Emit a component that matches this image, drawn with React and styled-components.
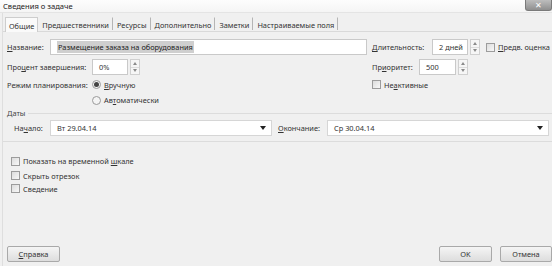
import React from "react";
import styled, { createGlobalStyle } from "styled-components";

const Global = createGlobalStyle`
  html, body { margin: 0; padding: 0; background: #f0f0f0; }
  body { font-family: "Noto Sans", "Open Sans", sans-serif; font-size: 7.4px; color: #333; }
  * { box-sizing: border-box; }
`;

const Window = styled.div`
  width: 552px;
  height: 266px;
  display: flex;
  flex-direction: column;
  background: #f0f0f0;
  overflow: hidden;
`;

const TitleBar = styled.div`
  height: 13px;
  flex: none;
  display: flex;
  align-items: flex-start;
  justify-content: space-between;
  background: linear-gradient(#fdfdfd, #f5f5f5);
  border-bottom: 1px solid #e4e4e4;
`;

const Title = styled.span`
  padding: 1px 0 0 3px;
  font-size: 7.6px;
  line-height: 11px;
  color: #222;
`;

const CloseBtn = styled.div`
  width: 27px;
  height: 11px;
  display: flex;
  align-items: center;
  justify-content: center;
  background: linear-gradient(#bdbdbd, #8f8f8f);
  border: 1px solid #7a7a7a;
  border-top: none;
  border-radius: 0 0 3px 3px;
  color: #fff;
  font-size: 8px;
  line-height: 8px;
`;

const Frame = styled.div`
  flex: 1;
  display: flex;
  flex-direction: column;
  margin-left: 2px;
  border-left: 1px solid #dedede;
`;

const TabStrip = styled.div`
  display: flex;
  align-items: flex-end;
  height: 19px;
  flex: none;
  padding-left: 2px;
  border-bottom: 1px solid #d9d9d9;
`;

const Tab = styled.div`
  height: ${(p) => (p.$active ? "15px" : "13px")};
  padding: 1px 3px 0 3px;
  margin-bottom: ${(p) => (p.$active ? "-1px" : "1px")};
  display: flex;
  align-items: center;
  border: 1px solid ${(p) => (p.$active ? "#cdcdcd" : "transparent")};
  border-bottom: none;
  border-right: 1px solid ${(p) => (p.$active ? "#cdcdcd" : "#b5b5b5")};
  background: ${(p) => (p.$active ? "#fafafa" : "transparent")};
  white-space: nowrap;
  color: #333;
`;

const Panel = styled.div`
  flex: 1;
  display: flex;
  flex-direction: column;
  padding: 7px 0 4px 4px;
`;

const Row = styled.div`
  display: flex;
  align-items: center;
  height: ${(p) => p.$h || 16}px;
  flex: none;
  margin-top: ${(p) => p.$mt || 0}px;
  margin-bottom: ${(p) => p.$mb || 0}px;
`;

const Half = styled.div`
  display: flex;
  align-items: center;
  width: ${(p) => p.$w}px;
  flex: ${(p) => (p.$w ? "none" : 1)};
`;

const Label = styled.span`
  width: ${(p) => p.$w}px;
  flex: none;
  white-space: nowrap;
  color: #333;
  padding-left: ${(p) => p.$pl || 0}px;
`;

const Input = styled.div`
  width: ${(p) => p.$w}px;
  height: 16px;
  flex: none;
  display: flex;
  align-items: center;
  justify-content: space-between;
  padding: 0 5px 0 6px;
  background: #fff;
  border: 1px solid ${(p) => p.$border || "#c9c9c9"};
  white-space: nowrap;
  color: #333;
`;

const Selected = styled.span`
  background: #cfcfcf;
  padding: 1px 1px;
  color: #222;
`;

const Spin = styled.div`
  width: 10px;
  height: 16px;
  margin-left: 2px;
  flex: none;
  display: flex;
  flex-direction: column;
  border: 1px solid #d0d0d0;
  background: #f6f6f6;
`;

const SpinHalf = styled.div`
  flex: 1;
  display: flex;
  align-items: center;
  justify-content: center;
  border-top: ${(p) => (p.$bottom ? "1px solid #dcdcdc" : "none")};
  svg { display: block; }
`;

const Arrow = ({ down }) => (
  <svg width="4" height="3" viewBox="0 0 4 3">
    <path d={down ? "M0 0H4L2 3Z" : "M0 3H4L2 0Z"} fill="#8a8a8a" />
  </svg>
);

const DropArrow = styled.span`
  width: 0;
  height: 0;
  border-left: 3px solid transparent;
  border-right: 3px solid transparent;
  border-top: 4px solid #222;
`;

const Check = styled.span`
  width: 9px;
  height: 9px;
  flex: none;
  margin-right: ${(p) => p.$mr || 3}px;
  border: 1px solid #9c9c9c;
  background: linear-gradient(135deg, #dcdcdc, #f8f8f8);
`;

const Radio = styled.span`
  width: 9px;
  height: 9px;
  flex: none;
  margin-right: 3px;
  border-radius: 50%;
  border: 1px solid #9a9a9a;
  background: #f4f4f4;
  display: flex;
  align-items: center;
  justify-content: center;
  &::after {
    content: "";
    width: 5px;
    height: 5px;
    border-radius: 50%;
    background: ${(p) => (p.$on ? "#444" : "transparent")};
  }
`;

const Option = styled.label`
  display: flex;
  align-items: center;
  white-space: nowrap;
  color: #333;
  margin-left: ${(p) => p.$ml || 0}px;
`;

const U = styled.span`
  text-decoration: underline;
`;

const Group = styled.div`
  display: flex;
  align-items: center;
  height: 10px;
  flex: none;
  color: #444;
  &::after {
    content: "";
    flex: 1;
    height: 1px;
    margin-left: 3px;
    background: #dcdcdc;
  }
`;

const Separator = styled.div`
  height: 1px;
  flex: none;
  background: #dcdcdc;
  margin: 5px 0 12px -4px;
`;

const CheckRow = styled.div`
  display: flex;
  align-items: center;
  flex: none;
  height: ${(p) => p.$h || 14}px;
  padding-left: 4px;
`;

const Spacer = styled.div`
  flex: 1;
`;

const Footer = styled.div`
  display: flex;
  align-items: center;
  flex: none;
  padding: 0 0 4px 4px;
`;

const Button = styled.div`
  width: ${(p) => p.$w}px;
  height: 16px;
  display: flex;
  align-items: center;
  justify-content: center;
  margin-left: ${(p) => p.$ml || 0}px;
  border: 1px solid #a9a9a9;
  border-radius: 2px;
  background: linear-gradient(#f5f5f5, #dddddd);
  color: #333;
`;

export default function App() {
  return (
    <>
      <Global />
      <Window>
        <TitleBar>
          <Title>Сведения о задаче</Title>
          <CloseBtn>✕</CloseBtn>
        </TitleBar>
        <Frame>
          <TabStrip>
            <Tab $active>Общие</Tab>
            <Tab>Предшественники</Tab>
            <Tab>Ресурсы</Tab>
            <Tab>Дополнительно</Tab>
            <Tab>Заметки</Tab>
            <Tab>Настраиваемые поля</Tab>
          </TabStrip>
          <Panel>
            <Row $mb={4}>
              <Half $w={365}>
                <Label $w={43}><U>Н</U>азвание:</Label>
                <Input $w={317}>
                  <Selected>Размещение заказа на оборудования</Selected>
                </Input>
              </Half>
              <Half>
                <Label $w={60}><U>Д</U>лительность:</Label>
                <Input $w={36}>2 дней</Input>
                <Spin>
                  <SpinHalf><Arrow /></SpinHalf>
                  <SpinHalf $bottom><Arrow down /></SpinHalf>
                </Spin>
                <Option $ml={6}>
                  <Check />
                  <span><U>П</U>редв. оценка</span>
                </Option>
              </Half>
            </Row>
            <Row $mb={2}>
              <Half $w={365}>
                <Label $w={85}>Про<U>ц</U>ент завершения:</Label>
                <Input $w={36}>0%</Input>
                <Spin>
                  <SpinHalf><Arrow /></SpinHalf>
                  <SpinHalf $bottom><Arrow down /></SpinHalf>
                </Spin>
              </Half>
              <Half>
                <Label $w={47}>Пр<U>и</U>оритет:</Label>
                <Input $w={37}>500</Input>
                <Spin>
                  <SpinHalf><Arrow /></SpinHalf>
                  <SpinHalf $bottom><Arrow down /></SpinHalf>
                </Spin>
              </Half>
            </Row>
            <Row $h={15}>
              <Half $w={365}>
                <Label $w={85}>Режим планирования:</Label>
                <Option>
                  <Radio $on />
                  <span><U>В</U>ручную</span>
                </Option>
              </Half>
              <Half>
                <Option>
                  <Check />
                  <span>Не<U>а</U>ктивные</span>
                </Option>
              </Half>
            </Row>
            <Row $h={16}>
              <Half $w={365}>
                <Label $w={85} />
                <Option>
                  <Radio />
                  <span>Ав<U>т</U>оматически</span>
                </Option>
              </Half>
            </Row>
            <Group>Даты</Group>
            <Row $h={16} $mt={2}>
              <Half $w={271}>
                <Label $w={43} $pl={7}>На<U>ч</U>ало:</Label>
                <Input $w={222} $border="#d6d6d6">
                  <span>Вт 29.04.14</span>
                  <DropArrow />
                </Input>
              </Half>
              <Half>
                <Label $w={49}><U>О</U>кончание:</Label>
                <Input $w={222} $border="#d6d6d6">
                  <span>Ср 30.04.14</span>
                  <DropArrow />
                </Input>
              </Half>
            </Row>
            <Separator />
            <CheckRow $h={14}>
              <Check />
              <span>Показать на временной <U>ш</U>кале</span>
            </CheckRow>
            <CheckRow $h={15}>
              <Check />
              <span>Скрыть отрезок</span>
            </CheckRow>
            <CheckRow $h={11}>
              <Check />
              <span>Сведение</span>
            </CheckRow>
            <Spacer />
          </Panel>
          <Footer>
            <Button $w={53}><U>С</U>правка</Button>
            <Spacer />
            <Button $w={53}>OK</Button>
            <Button $w={52} $ml={8}>Отмена</Button>
          </Footer>
        </Frame>
      </Window>
    </>
  );
}
